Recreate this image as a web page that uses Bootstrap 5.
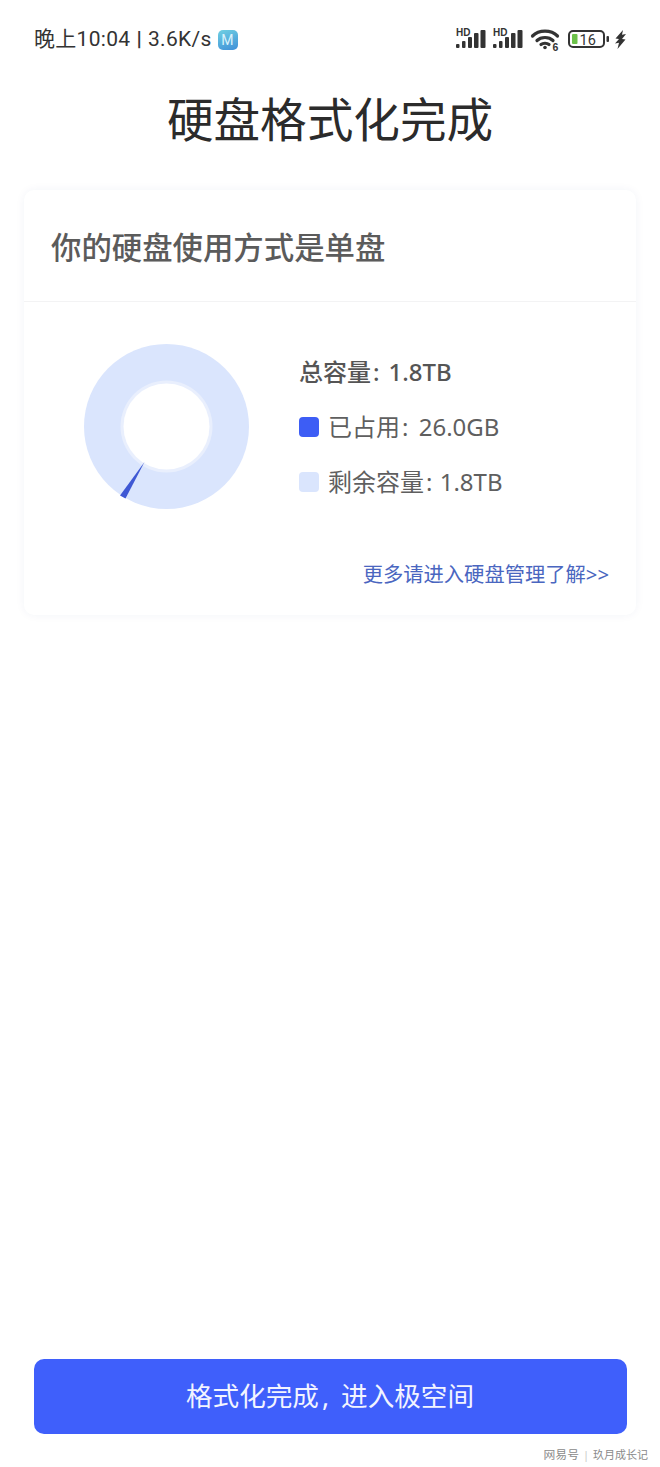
<!DOCTYPE html>
<html lang="zh">
<head>
<meta charset="utf-8">
<title>硬盘格式化完成</title>
<link href="https://cdn.jsdelivr.net/npm/bootstrap@5.3.0/dist/css/bootstrap.min.css" rel="stylesheet">
<style>
html,body{margin:0;background:#fff;}
body{font-family:"Noto Sans","Noto Sans CJK SC",sans-serif;color:#333;}
.screen{width:660px;height:1467px;overflow:hidden;}
.statusbar{height:78px;padding:0 34px 0 34px;}
.st-left{font-size:21px;line-height:1;color:#333;font-family:"Roboto","Noto Sans CJK SC",sans-serif;letter-spacing:.3px;white-space:nowrap;padding-top:1px;}
.st-pipe{font-weight:700;margin:0 6px 0 6px;}
.appicon{width:20px;height:20px;border-radius:5px;background:linear-gradient(160deg,#6fd0e2,#3f8fd8);color:#d9f2fb;font-size:14px;margin-left:6px;font-family:"Roboto",sans-serif;}
.st-right{gap:6px;}
.sig{position:relative;width:31px;height:22px;display:block;}
.hd{position:absolute;left:1px;top:0;font:700 10px/1 "Liberation Sans",sans-serif;color:#333;}
.page-title{font-size:46.6px;line-height:1;font-weight:400;color:#2b2b2b;text-align:center;margin:18px 0 47px;white-space:nowrap;}
.disk-panel{margin:0 24px;height:425px;border:0;border-radius:10px;box-shadow:0 0 10px rgba(40,60,120,.055);}
.panel-head{height:112px;padding:6px 27px 0;border-bottom:1px solid #f3f3f4;font-size:30.4px;font-weight:500;color:#5b5b5b;white-space:nowrap;}
.panel-main{padding:42px 27px 0 60px;}
.donut{width:165px;height:165px;display:block;flex:none;}
.legend{margin-left:51px;padding-top:14px;gap:27px;font-size:24px;line-height:28px;color:#5f5f5f;white-space:nowrap;}
.legend-strong{font-weight:500;color:#555;margin-left:-1px;}
.swatch{width:20px;height:20px;border-radius:4px;margin-right:9px;margin-left:-1px;}
.sw-used{background:#3d5df5;}
.sw-free{background:#dae5fd;}
.colon-gap{margin:0 4px 0 2px;}
.colon-wide{margin:0 9px 0 2px;}
.colon-tight{margin:0 1px 0 2px;}
.more-link{font-size:20.3px;line-height:1;color:#4a66c0;text-decoration:none;white-space:nowrap;}
.link-row{padding:55px 27px 0 0;}
.bottom-zone{height:108px;padding:0 33.5px;position:relative;}
.enter-btn{width:593px;height:75px;border:0;border-radius:10px;background:#3f5ffb;color:#f2f4ff;font-size:26.6px;font-weight:400;display:flex;align-items:center;justify-content:center;padding:0;white-space:nowrap;}
.enter-btn:hover{background:#3f5ffb;color:#f2f4ff;}
.btn-comma{margin:0 12px 0 3px;}
.wm{position:absolute;right:12px;bottom:6px;font-size:11px;line-height:1;color:#8a8a8a;white-space:nowrap;}
.wm b{font-weight:400;font-size:11.8px;}
.wm i{font-style:normal;color:#c8c8c8;margin:0 4px;}
</style>
</head>
<body>
<div class="screen d-flex flex-column">
  <div class="statusbar d-flex align-items-center justify-content-between">
    <div class="st-left d-flex align-items-center">晚上10:04<span class="st-pipe">|</span>3.6K/s<span class="appicon d-inline-flex align-items-center justify-content-center">M</span></div>
    <div class="st-right d-flex align-items-center">
      <span class="sig"><span class="hd">HD</span><svg class="d-block" width="31" height="22" viewBox="0 0 31 22"><g fill="#333"><rect x="1" y="16" width="3.500" height="4" rx="1"/><rect x="7" y="13" width="3.500" height="7" rx="1"/><rect x="13" y="9" width="4" height="11" rx="1"/><rect x="19" y="5" width="4.500" height="15" rx="1"/><rect x="25.500" y="2" width="5" height="18" rx="1"/></g></svg></span>
      <span class="sig"><span class="hd">HD</span><svg class="d-block" width="31" height="22" viewBox="0 0 31 22"><g fill="#333"><rect x="1" y="16" width="3.500" height="4" rx="1"/><rect x="7" y="13" width="3.500" height="7" rx="1"/><rect x="13" y="9" width="4" height="11" rx="1"/><rect x="19" y="5" width="4.500" height="15" rx="1"/><rect x="25.500" y="2" width="5" height="18" rx="1"/></g></svg></span>
      <svg class="d-block" width="32" height="25" viewBox="0 0 32 25"><g fill="none" stroke="#333" stroke-width="3.200" stroke-linecap="round"><path d="M3.500 9C10 2.500 22 2.500 28.500 9"/><path d="M8 13.500C12 9.500 20 9.500 24 13.500"/><path d="M12 17.500C14 15.800 18 15.800 20 17.500"/></g><circle cx="16" cy="20.500" r="1.800" fill="#333"/><text x="23.500" y="24" font-size="10.500" font-weight="700" font-family="Liberation Sans" fill="#333">6</text></svg>
      <svg class="d-block" width="42" height="20" viewBox="0 0 42 20"><rect x="2" y="2" width="35" height="16" rx="4" fill="none" stroke="#333" stroke-width="2"/><rect x="5" y="5" width="5.500" height="10" rx="1" fill="#6cc24a"/><text x="12.500" y="15.500" font-size="14.500" font-family="Roboto" fill="#333">16</text><rect x="39.500" y="7" width="2.500" height="6" rx="1" fill="#333"/></svg>
      <svg class="d-block" width="11" height="19" viewBox="0 0 11 19"><path d="M8 0L.5 8.500l3.500.5L0 13.500l4-.8L2.500 19 10.500 9.500l-3.500-.5L11 4l-4 .8z" fill="#333"/></svg>
    </div>
  </div>

  <h1 class="page-title">硬盘格式化完成</h1>

  <div class="card disk-panel">
    <div class="panel-head d-flex align-items-center">你的硬盘使用方式是单盘</div>
    <div class="panel-main d-flex">
      <svg class="donut" viewBox="0 0 165 165">
        <circle cx="82.500" cy="82.500" r="82.500" fill="#dae5fd"/>
        <circle cx="82.500" cy="82.500" r="46" fill="#e9effd"/>
        <circle cx="82.500" cy="82.500" r="43" fill="#fff"/>
        <path d="M60.500 118L36 151.500 41.500 154.500z" fill="#3f58d4"/>
      </svg>
      <div class="legend d-flex flex-column">
        <div class="legend-strong">总容量<span class="colon-wide">:</span>1.8TB</div>
        <div class="d-flex align-items-center"><span class="swatch sw-used"></span>已占用<span class="colon-gap">:</span>&nbsp;26.0GB</div>
        <div class="d-flex align-items-center"><span class="swatch sw-free"></span>剩余容量<span class="colon-tight">:</span>&nbsp;1.8TB</div>
      </div>
    </div>
    <div class="link-row d-flex justify-content-end"><a class="more-link" href="#">更多请进入硬盘管理了解&gt;&gt;</a></div>
  </div>

  <div class="bottom-zone mt-auto">
    <button type="button" class="btn enter-btn">格式化完成<span class="btn-comma">,</span>进入极空间</button>
    <div class="wm"><b>网易号</b><i>|</i>玖月成长记</div>
  </div>
</div>
<script src="https://cdn.jsdelivr.net/npm/bootstrap@5.3.0/dist/js/bootstrap.bundle.min.js"></script>
</body>
</html>
